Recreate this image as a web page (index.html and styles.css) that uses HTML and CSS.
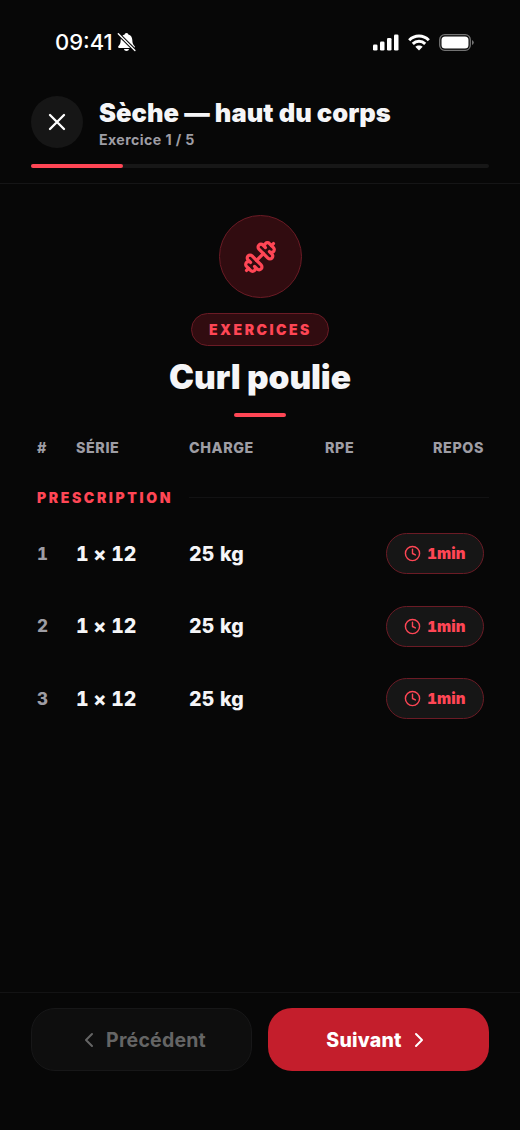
FILE: index.html
```html
<!DOCTYPE html>
<html lang="fr">
<head>
<meta charset="utf-8">
<title>Sèche — haut du corps</title>
<link rel="stylesheet" href="styles.css">
</head>
<body>
<svg class="defs" width="0" height="0">
  <symbol id="clock" viewBox="0 0 24 24"><circle cx="12" cy="12" r="10"/><path d="M12 6v6l4 2"/></symbol>
</svg>
<div class="screen">
  <div class="status">
    <div class="status-left">
      <span class="time">09:41</span>
      <svg class="bell" viewBox="0 0 18 20"><path fill="#fff" d="M9 1C7.800 1 7.200 1.800 7.200 2.500C4.400 3.300 3.300 5.500 3.200 8C3.100 11.500 2.400 12.500 1 14C.2 15 .6 15.900 1.700 15.900H16.300C17.400 15.900 17.800 15 17 14C15.600 12.500 14.900 11.500 14.800 8C14.700 5.500 13.600 3.300 10.800 2.500C10.800 1.800 10.200 1 9 1ZM6.500 17H11.500C11.300 19.600 6.700 19.600 6.500 17Z"/><path stroke="#070707" stroke-width="3.400" d="M0 1L18 19"/><path stroke="#fff" stroke-width="1.400" stroke-linecap="round" d="M.8 1.800L17.400 18.400"/></svg>
    </div>
    <div class="status-right">
      <svg class="signal" viewBox="0 0 26 17" fill="#fff"><rect x="0" y="10.500" width="4.500" height="6" rx="1.300"/><rect x="7" y="7.500" width="4.500" height="9" rx="1.300"/><rect x="14" y="4" width="4.500" height="12.500" rx="1.300"/><rect x="21" y=".5" width="4.500" height="16" rx="1.300"/></svg>
      <svg class="wifi" viewBox="0 0 22 17" fill="none" stroke="#fff" stroke-width="3"><path d="M1.200 6.200C6.700.7 15.300.7 20.800 6.200"/><path d="M4.800 9.900C8.300 6.500 13.700 6.500 17.200 9.900"/><path fill="#fff" stroke="none" d="M11 16.500L7.300 12.800C9.300 11 12.700 11 14.700 12.800Z"/></svg>
      <svg class="battery" viewBox="0 0 36 17"><rect x=".7" y=".7" width="30.600" height="15.600" rx="5" fill="none" stroke="#737373" stroke-width="1.300"/><rect x="2.500" y="2.500" width="27" height="12" rx="3.500" fill="#fff"/><path d="M33 6V11Q34.800 10 34.800 8.500Q34.800 7 33 6Z" fill="#737373"/></svg>
    </div>
  </div>
  <header class="header">
    <div class="heading">
      <button class="close"><svg viewBox="0 0 24 24"><path d="M18 6 6 18M6 6l12 12"/></svg></button>
      <div class="heading-text">
        <h1>Sèche — haut du corps</h1>
        <p class="step">Exercice 1 / 5</p>
      </div>
    </div>
    <div class="progress"><div class="progress-fill"></div></div>
  </header>
  <main>
    <section class="hero">
      <div class="medal"><svg viewBox="0 0 24 24"><path d="M17.596 12.768a2 2 0 1 0 2.829-2.829l-1.768-1.767a2 2 0 0 0 2.828-2.829l-2.828-2.828a2 2 0 0 0-2.829 2.828l-1.767-1.768a2 2 0 1 0-2.829 2.829z"/><path d="m2.500 21.500 1.400-1.400M20.100 3.900l1.400-1.400"/><path d="M5.343 21.485a2 2 0 1 0 2.829-2.828l1.767 1.768a2 2 0 1 0 2.829-2.829l-6.364-6.364a2 2 0 1 0-2.829 2.829l1.768 1.767a2 2 0 0 0-2.828 2.829z"/><path d="m9.600 14.400 4.800-4.800"/></svg></div>
      <span class="tag">EXERCICES</span>
      <h2>Curl poulie</h2>
      <div class="underline"></div>
    </section>
    <div class="row labels"><span>#</span><span>SÉRIE</span><span>CHARGE</span><span>RPE</span><span class="end">REPOS</span></div>
    <div class="section-title"><span>PRESCRIPTION</span><i></i></div>
    <div class="row set"><span class="num">1</span><span class="reps">1 × 12</span><span class="load">25 kg</span><span></span><span class="rest"><svg><use href="#clock"/></svg>1min</span></div>
    <div class="row set"><span class="num">2</span><span class="reps">1 × 12</span><span class="load">25 kg</span><span></span><span class="rest"><svg><use href="#clock"/></svg>1min</span></div>
    <div class="row set"><span class="num">3</span><span class="reps">1 × 12</span><span class="load">25 kg</span><span></span><span class="rest"><svg><use href="#clock"/></svg>1min</span></div>
  </main>
  <footer>
    <button class="btn prev"><svg viewBox="0 0 24 24"><path d="m15 18-6-6 6-6"/></svg><span>Précédent</span></button>
    <button class="btn next"><span>Suivant</span><svg viewBox="0 0 24 24"><path d="m9 18 6-6-6-6"/></svg></button>
  </footer>
</div>
</body>
</html>
```

FILE: styles.css
```css
* { box-sizing: border-box; }
body { margin: 0; background: #070707; color: #f5f5f7; font-family: Inter, sans-serif; }
h1, h2, p { margin: 0; }
button { font: inherit; border: 0; padding: 0; }
svg { display: block; flex: none; }
.defs { position: absolute; }
.screen { width: 520px; height: 1130px; display: flex; flex-direction: column; overflow: hidden; }

.status { height: 84px; padding: 0 45px 0 55px; display: flex; justify-content: space-between; align-items: center; }
.status-left, .status-right { display: flex; align-items: center; }
.status-left { gap: 5px; }
.time { width: 57px; white-space: nowrap; font-size: 22px; font-weight: 500; letter-spacing: 0; color: #fff; }
.bell { width: 19px; height: 20px; }
.signal { width: 26px; height: 17px; margin-right: 9px; }
.wifi { width: 22px; height: 17px; margin-right: 9px; }
.battery { width: 36px; height: 17px; }

.header { height: 100px; padding: 12px 31px 0; border-bottom: 1px solid #151516; }
.heading { display: flex; align-items: center; gap: 16px; height: 52px; }
.heading-text { padding-top: 2px; }
.close { width: 52px; height: 52px; border-radius: 50%; background: #161616; display: grid; place-items: center; }
.close svg { width: 28px; height: 28px; }
.close path, .medal path, .btn path { fill: none; stroke: currentColor; stroke-width: 2; stroke-linecap: round; stroke-linejoin: round; }
.close { color: #fff; }
h1 { font-size: 25.500px; line-height: 32px; font-weight: 900; letter-spacing: 0.04px; white-space: nowrap; }
.step { font-size: 14.200px; line-height: 21px; font-weight: 700; letter-spacing: 0.4px; color: #9e9da4; }
.progress { height: 4px; margin-top: 16px; border-radius: 2px; background: #171717; }
.progress-fill { width: 20%; height: 4px; border-radius: 2px; background: #ff4655; }

main { flex: 1; padding: 31px 31px 0; }
.hero { display: flex; flex-direction: column; align-items: center; }
.medal { width: 83px; height: 83px; border-radius: 50%; background: #310c10; border: 1.300px solid #6b1b25; display: grid; place-items: center; color: #ff4655; }
.medal svg { width: 34px; height: 34px; }
.medal path { stroke-width: 2.300; }
.tag { width: 138px; height: 33px; margin-top: 15px; padding-left: 17px; border: 1.300px solid #6b1b25; border-radius: 17px; background: #310c10; color: #ff4655; font-size: 14px; line-height: 32px; font-weight: 900; letter-spacing: 2.500px; white-space: nowrap; }
h2 { margin-top: 9px; font-size: 33.500px; line-height: 44px; font-weight: 900; letter-spacing: -0.1px; }
.underline { width: 52px; height: 4px; margin-top: 14px; border-radius: 2px; background: #ff4655; }
.row { display: grid; grid-template-columns: 39px 113px 136px 1fr 98px; padding: 0 5px 0 6px; align-items: center; }
.labels { height: 20px; margin-top: 20px; font-size: 14.300px; font-weight: 800; letter-spacing: 0.6px; color: #9e9da4; }
.end { text-align: right; }
.section-title { height: 20px; margin-top: 30px; padding-left: 6px; display: flex; align-items: center; color: #ff4655; font-size: 14px; font-weight: 900; letter-spacing: 2.600px; }
.section-title span { width: 152px; padding-top: 1px; }
.section-title i { flex: 1; height: 1px; background: #121213; }
.set { height: 41px; font-size: 19.500px; font-weight: 800; font-variant-numeric: tabular-nums; }
.set + .set { margin-top: 31.500px; }
.section-title + .set { margin-top: 26px; }
.num { font-size: 17px; font-weight: 800; color: #9e9da4; }
.reps { letter-spacing: -0.1px; }
.load { letter-spacing: 0.2px; }
.rest { height: 41px; border: 1.300px solid #6b1b25; border-radius: 21px; background: #161616; color: #ff4655; display: flex; align-items: center; justify-content: center; gap: 6px; font-size: 15px; font-weight: 900; letter-spacing: 0.1px; }
.rest svg { width: 17px; height: 17px; overflow: visible; fill: none; stroke: currentColor; stroke-width: 2; stroke-linecap: round; stroke-linejoin: round; }

footer { height: 138px; padding: 15px 31px 0; border-top: 1px solid #131314; display: grid; grid-template-columns: 1fr 1fr; gap: 16px; }
.btn { height: 63px; border-radius: 24px; display: flex; align-items: center; justify-content: center; gap: 5px; font-size: 19.500px; font-weight: 800; letter-spacing: 0.2px; }
.btn svg { width: 24px; height: 24px; }
.prev { background: #0e0e0e; border: 1.300px solid #171718; color: #656565; }
.prev { font-weight: 700; }
.next { background: #c41e2c; color: #fff; }
```
